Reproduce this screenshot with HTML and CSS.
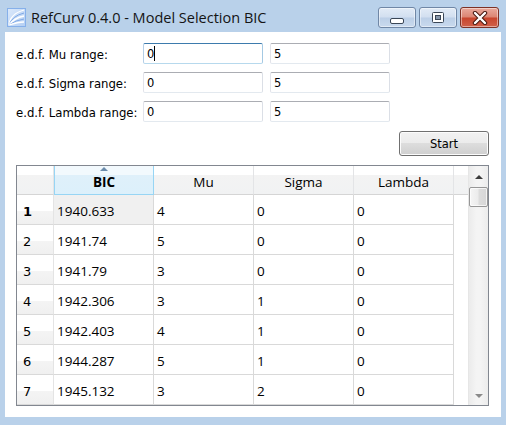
FILE: index.html
```html
<!DOCTYPE html>
<html>
<head>
<meta charset="utf-8">
<link rel="stylesheet" href="styles.css">
</head>
<body>
<div class="window">
  <div class="titlebar">
    <svg class="app-icon" width="19" height="19" viewBox="0 0 19 19">
      <defs>
        <linearGradient id="ig" x1="0" y1="0" x2="1" y2="1">
          <stop offset="0" stop-color="#dbe9fb"/>
          <stop offset="1" stop-color="#b4cff3"/>
        </linearGradient>
      </defs>
      <rect x="0.5" y="0.5" width="18" height="18" fill="url(#ig)" stroke="#86b0ea"/>
      <path d="M2 17 Q3 6 17 2" fill="none" stroke="#ffffff" stroke-width="1.3"/>
      <path d="M2 17 Q5 8 17 5" fill="none" stroke="#7fa9e6" stroke-width="1"/>
      <path d="M2 17 Q7 10 17 8" fill="none" stroke="#ffffff" stroke-width="1.3"/>
      <path d="M2 17 Q9 12 17 11" fill="none" stroke="#7fa9e6" stroke-width="1"/>
      <path d="M2 17 Q11 14 17 14" fill="none" stroke="#ffffff" stroke-width="1.3"/>
    </svg>
    <span class="title">RefCurv 0.4.0 - Model Selection BIC</span>
    <div class="caption">
      <div class="cbtn cmin">
        <svg width="14" height="6" viewBox="0 0 14 6"><rect x="0.5" y="0.5" width="13" height="5" rx="1.5" fill="#ffffff" stroke="#3a4656"/></svg>
      </div>
      <div class="cbtn cmax">
        <svg width="12" height="11" viewBox="0 0 12 11"><rect x="0.5" y="0.5" width="11" height="10" rx="1" fill="#ffffff" stroke="#3a4656"/><rect x="3.5" y="3.5" width="5" height="4" fill="#8797ab" stroke="#3a4656"/></svg>
      </div>
      <div class="cbtn cclose">
        <svg width="16" height="14" viewBox="0 0 16 14"><path d="M3 2 L13 12 M13 2 L3 12" stroke="#4a1a12" stroke-width="4.4" stroke-linecap="round"/><path d="M3 2 L13 12 M13 2 L3 12" stroke="#ffffff" stroke-width="2.4" stroke-linecap="round"/></svg>
      </div>
    </div>
  </div>

  <div class="client">
    <div class="form">
      <div class="label">e.d.f. Mu range:</div>
      <div class="field focus">0<span class="caret"></span></div>
      <div class="field">5</div>
      <div class="label">e.d.f. Sigma range:</div>
      <div class="field">0</div>
      <div class="field">5</div>
      <div class="label">e.d.f. Lambda range:</div>
      <div class="field">0</div>
      <div class="field">5</div>
    </div>

    <div class="actions">
      <div class="start">Start</div>
    </div>

    <div class="table">
      <div class="grid">
        <div class="hcell corner"></div>
        <div class="hcell sorted"><span class="sort-arrow"></span><b>BIC</b></div>
        <div class="hcell">Mu</div>
        <div class="hcell">Sigma</div>
        <div class="hcell">Lambda</div>
        <div class="hcell filler"></div>

        <div class="rhead current">1</div><div class="cell currentcell">1940.633</div><div class="cell">4</div><div class="cell">0</div><div class="cell">0</div><div class="bfill"></div>
        <div class="rhead">2</div><div class="cell">1941.74</div><div class="cell">5</div><div class="cell">0</div><div class="cell">0</div><div class="bfill"></div>
        <div class="rhead">3</div><div class="cell">1941.79</div><div class="cell">3</div><div class="cell">0</div><div class="cell">0</div><div class="bfill"></div>
        <div class="rhead">4</div><div class="cell">1942.306</div><div class="cell">3</div><div class="cell">1</div><div class="cell">0</div><div class="bfill"></div>
        <div class="rhead">5</div><div class="cell">1942.403</div><div class="cell">4</div><div class="cell">1</div><div class="cell">0</div><div class="bfill"></div>
        <div class="rhead">6</div><div class="cell">1944.287</div><div class="cell">5</div><div class="cell">1</div><div class="cell">0</div><div class="bfill"></div>
        <div class="rhead">7</div><div class="cell">1945.132</div><div class="cell">3</div><div class="cell">2</div><div class="cell">0</div><div class="bfill"></div>
      </div>
      <div class="vscroll">
        <div class="sb-btn">
          <svg width="8" height="4" viewBox="0 0 8 4"><path d="M0 4 L4 0 L8 4 Z" fill="#3c3c3c"/></svg>
        </div>
        <div class="sb-thumb"></div>
        <div class="sb-track"></div>
        <div class="sb-btn down">
          <svg width="8" height="4" viewBox="0 0 8 4"><path d="M0 0 L8 0 L4 4 Z" fill="#8a8a8a"/></svg>
        </div>
      </div>
    </div>
  </div>
</div>
</body>
</html>
```

FILE: styles.css
```css
html, body {
  margin: 0;
  padding: 0;
}
body {
  width: 506px;
  height: 425px;
  overflow: hidden;
  background: #b9d1ea;
}
.window {
  width: 506px;
  height: 425px;
  display: flex;
  flex-direction: column;
  background: #b9d1ea;
}
.titlebar {
  height: 32px;
  display: flex;
  align-items: flex-start;
  flex: none;
}
.app-icon {
  margin: 8px 0 0 7px;
  flex: none;
}
.title {
  margin: 8px 0 0 5px;
  font-family: "Open Sans", sans-serif;
  font-size: 14.5px;
  line-height: 20px;
  color: #141414;
  white-space: nowrap;
}
.caption {
  margin: 7px 7px 0 auto;
  display: flex;
  gap: 3px;
}
.cbtn {
  height: 21px;
  width: 38px;
  box-sizing: border-box;
  border: 1px solid #7087a6;
  border-radius: 3px;
  display: flex;
  align-items: center;
  justify-content: center;
  box-shadow: inset 0 0 0 1px rgba(255,255,255,0.45);
}
.cmin, .cmax {
  background: linear-gradient(#e2ebf6 0%, #d2dff0 48%, #bccfe7 52%, #c9daee 100%);
}
.cmin svg {
  margin-top: 7px;
}
.cclose {
  width: 39px;
  border-color: #7d3227;
  background: linear-gradient(#e9aa9d 0%, #dc8573 48%, #c8452d 52%, #d0604a 100%);
}
.client {
  flex: 1;
  margin: 0 5px 8px 5px;
  background: #ffffff;
  padding: 11px 12px 11px 11px;
  display: flex;
  flex-direction: column;
  box-sizing: border-box;
}
.form {
  display: grid;
  grid-template-columns: 120px 120px 120px;
  grid-auto-rows: 21px;
  column-gap: 7px;
  row-gap: 8px;
}
.label {
  font-family: "DejaVu Sans", sans-serif;
  font-size: 11.7px;
  color: #000;
  display: flex;
  align-items: center;
  padding-top: 2px;
  white-space: nowrap;
}
.field {
  box-sizing: border-box;
  height: 21px;
  border: 1px solid;
  border-color: #abadb3 #dbdfe6 #e3e9ef #e2e3ea;
  border-radius: 2px;
  padding-left: 3px;
  font-family: "DejaVu Sans", sans-serif;
  font-size: 11.5px;
  color: #000;
  display: flex;
  align-items: center;
}
.field.focus {
  border-color: #3d7bad #a4c9e3 #b7d9ed #b5cfe7;
}
.caret {
  display: inline-block;
  width: 1px;
  height: 15px;
  background: #000;
  margin-left: 0;
}
.actions {
  margin-top: 9px;
  display: flex;
  justify-content: flex-end;
}
.start {
  width: 90px;
  height: 25px;
  box-sizing: border-box;
  border: 1px solid #707070;
  border-radius: 3px;
  background: linear-gradient(#f2f2f2 0%, #ebebeb 50%, #dddddd 50%, #cfcfcf 100%);
  box-shadow: inset 0 0 0 1px #fcfcfc;
  font-family: "DejaVu Sans", sans-serif;
  font-size: 11.5px;
  color: #000;
  display: flex;
  align-items: center;
  justify-content: center;
  padding-top: 1px;
}
.table {
  margin-top: 9px;
  width: 473px;
  height: 241px;
  box-sizing: border-box;
  border: 1px solid #828790;
  display: flex;
}
.grid {
  flex: 1;
  display: grid;
  grid-template-columns: 37px 100px 100px 100px 100px 1fr;
  grid-template-rows: 29px repeat(7, 30px);
  overflow: hidden;
}
.hcell {
  position: relative;
  box-sizing: border-box;
  border-right: 1px solid #e3e4e6;
  border-bottom: 1px solid #d5d5d5;
  background: linear-gradient(#ffffff 0, #ffffff 9px, #f3f3f3 9px, #f1f2f3 100%);
  font-family: "Open Sans", sans-serif;
  font-size: 13.5px;
  color: #000;
  display: flex;
  align-items: center;
  justify-content: center;
  padding-top: 3px;
}
.hcell.filler {
  border-right: none;
}
.hcell.sorted {
  border: 1px solid #97d5f4;
  border-top: none;
  background: linear-gradient(#f2f9fd 0, #f2f9fd 9px, #dff0fa 9px, #dcf0fb 100%);
}
.hcell.sorted b {
  font-weight: 700;
}
.sort-arrow {
  position: absolute;
  top: 1px;
  left: 45px;
  width: 0;
  height: 0;
  border-left: 4.5px solid transparent;
  border-right: 4.5px solid transparent;
  border-bottom: 4px solid #6b8bab;
}
.rhead {
  box-sizing: border-box;
  border-bottom: 1px solid #d9d9d9;
  border-right: 1px solid #e4e4e4;
  background: linear-gradient(#ffffff 0%, #ffffff 55%, #f4f4f4 56%, #f0f0f0 100%);
  font-family: "DejaVu Sans", sans-serif;
  font-size: 13px;
  color: #000;
  display: flex;
  align-items: center;
  padding: 3px 0 0 6px;
}
.rhead.current {
  font-weight: 700;
}
.cell {
  box-sizing: border-box;
  border-right: 1px solid #d9d9d9;
  border-bottom: 1px solid #d9d9d9;
  font-family: "Open Sans", sans-serif;
  font-size: 13.5px;
  color: #000;
  display: flex;
  align-items: center;
  padding: 3px 0 0 3px;
  white-space: nowrap;
}
.cell.currentcell {
  background: #f0f0f0;
}
.bfill {
  background: #fff;
}
.vscroll {
  width: 20px;
  flex: none;
  box-sizing: border-box;
  border-left: 1px solid #e6e6e6;
  background: linear-gradient(90deg, #ebebeb 0%, #f4f4f4 40%, #f4f4f4 60%, #ececec 100%);
  display: flex;
  flex-direction: column;
}
.sb-btn {
  height: 21px;
  flex: none;
  display: flex;
  align-items: center;
  justify-content: center;
}
.sb-btn.down svg {
  margin-top: 2px;
}
.sb-thumb {
  height: 20px;
  flex: none;
  box-sizing: border-box;
  border: 1px solid #979797;
  border-radius: 2px;
  background: linear-gradient(90deg, #f5f5f5 0%, #ececec 45%, #dcdcdc 55%, #d6d6d6 100%);
  box-shadow: inset 0 0 0 1px rgba(255,255,255,0.7);
}
.sb-track {
  flex: 1;
}
```
